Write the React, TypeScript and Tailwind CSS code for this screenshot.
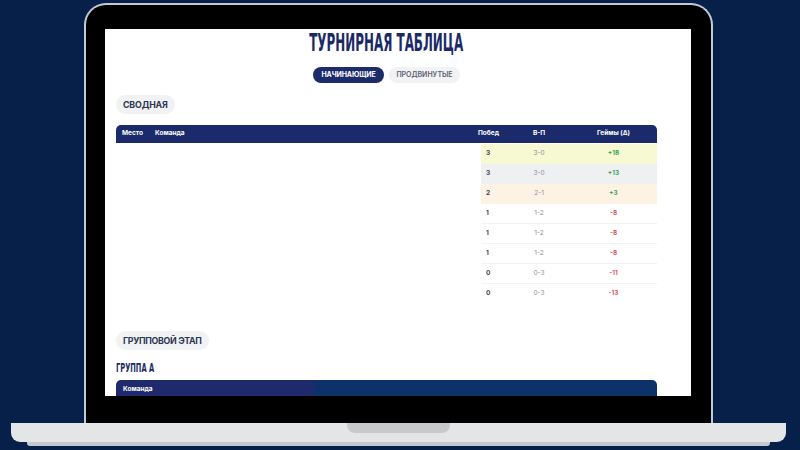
import React from "react";

const rows = [
  { w: "3", wl: "3-0", g: "+18", bg: "bg-[#f6f9d2]", pos: true },
  { w: "3", wl: "3-0", g: "+13", bg: "bg-[#eef0f2]", pos: true },
  { w: "2", wl: "2-1", g: "+3", bg: "bg-[#fdf2e4]", pos: true },
  { w: "1", wl: "1-2", g: "-8", bg: "bg-white", pos: false },
  { w: "1", wl: "1-2", g: "-8", bg: "bg-white", pos: false },
  { w: "1", wl: "1-2", g: "-8", bg: "bg-white", pos: false },
  { w: "0", wl: "0-3", g: "-11", bg: "bg-white", pos: false },
  { w: "0", wl: "0-3", g: "-13", bg: "bg-white", pos: false },
];

const cond = { fontFamily: '"Liberation Sans Narrow", "DejaVu Sans Condensed", "Liberation Sans", sans-serif' };
const ui = { fontFamily: 'Inter, Roboto, "Liberation Sans", sans-serif' };

export default function App() {
  return (
    <div className="w-[800px] h-[450px] bg-[#06204a] overflow-hidden flex flex-col items-center pr-[3px]" style={ui}>
      {/* bezel */}
      <div className="mt-[3px] w-[629px] h-[420px] bg-black rounded-t-[22px] border-[2px] border-b-0 border-[#c3c9d4] pt-[24px] pl-[19px] pr-[20px] pb-[27px] flex">
        <div className="w-[586px] h-[367px] bg-white overflow-hidden flex flex-col">
          <div className="ml-[11px] w-[541px] flex flex-col">
            {/* title */}
            <div className="h-[27px] flex items-center justify-center">
              <span className="inline-block text-[25px] leading-none font-bold text-[#1b2a66] [transform:scaleX(0.53)] whitespace-nowrap" style={cond}>
                ТУРНИРНАЯ ТАБЛИЦА
              </span>
            </div>
            {/* tabs */}
            <div className="mt-[11px] flex justify-center gap-[5px]">
              <div className="h-[16px] w-[71px] rounded-full bg-[#1c2b6a] text-white text-[7px] font-bold flex items-center justify-center tracking-[-0.1px]">
                НАЧИНАЮЩИЕ
              </div>
              <div className="h-[16px] w-[71px] rounded-full bg-[#f1f2f4] text-[#5b6170] text-[7px] font-semibold flex items-center justify-center">
                ПРОДВИНУТЫЕ
              </div>
            </div>
            {/* svodnaya */}
            <div className="mt-[12px] flex">
              <div className="h-[19px] px-[7px] rounded-full bg-[#f1f2f4] text-[#2b3550] text-[8.8px] tracking-[-0.15px] font-bold flex items-center">
                СВОДНАЯ
              </div>
            </div>
            {/* table */}
            <div className="mt-[11px] flex flex-col">
              <div className="h-[18px] bg-[#1b2a6a] rounded-t-[5px] flex items-center text-white text-[6.5px] font-bold">
                <div className="w-[39px] pl-[6px]">Место</div>
                <div className="flex-1">Команда</div>
                <div className="w-[36px] pl-[6px]">Побед</div>
                <div className="w-[62px] text-center">В-П</div>
                <div className="w-[87px] text-center">Геймы (Δ)</div>
              </div>
              <div className="flex flex-col mt-[1px]">
                {rows.map((r, i) => (
                  <div key={i} className="h-[20px] flex">
                    <div className="flex-1 bg-white" />
                    <div className={`w-[176px] flex items-center text-[6.5px] ${r.bg} ${i > 2 && i < 7 ? "border-b border-[#f1f2f4]" : ""}`}>
                      <div className="w-[27px] pl-[5px] font-bold text-[#3b4254]">{r.w}</div>
                      <div className="w-[62px] text-center text-[#8b909a]">{r.wl}</div>
                      <div className={`w-[87px] text-center font-semibold ${r.pos ? "text-[#2e9e4f]" : "text-[#d9464d]"}`}>{r.g}</div>
                    </div>
                  </div>
                ))}
              </div>
            </div>
            {/* group stage */}
            <div className="mt-[27px] flex">
              <div className="h-[19px] px-[7px] rounded-full bg-[#f1f2f4] text-[#2b3550] text-[8.8px] tracking-[-0.3px] font-bold flex items-center">
                ГРУППОВОЙ ЭТАП
              </div>
            </div>
            <div className="mt-[11px] h-[12px] flex items-center">
              <span className="inline-block origin-left text-[13px] leading-none font-bold text-[#1b2a66] [transform:scaleX(0.57)] whitespace-nowrap" style={cond}>
                ГРУППА А
              </span>
            </div>
            <div className="mt-[7px] h-[20px] rounded-t-[5px] overflow-hidden flex">
              <div className="w-[198px] bg-[#1f2a6c] flex items-center pl-[7px] text-white text-[6.5px] font-bold">Команда</div>
              <div className="flex-1 bg-[#0d3169]" />
            </div>
          </div>
        </div>
      </div>
      {/* base */}
      <div className="w-[775px] h-[19px] bg-[#e4e5e7] rounded-b-[9px] flex justify-center">
        <div className="w-[103px] h-[10px] bg-[#c8c9cb] rounded-b-[8px]" />
      </div>
      <div className="w-[743px] h-[4px] bg-[#c6cad0] rounded-b-[3px]" />
    </div>
  );
}
